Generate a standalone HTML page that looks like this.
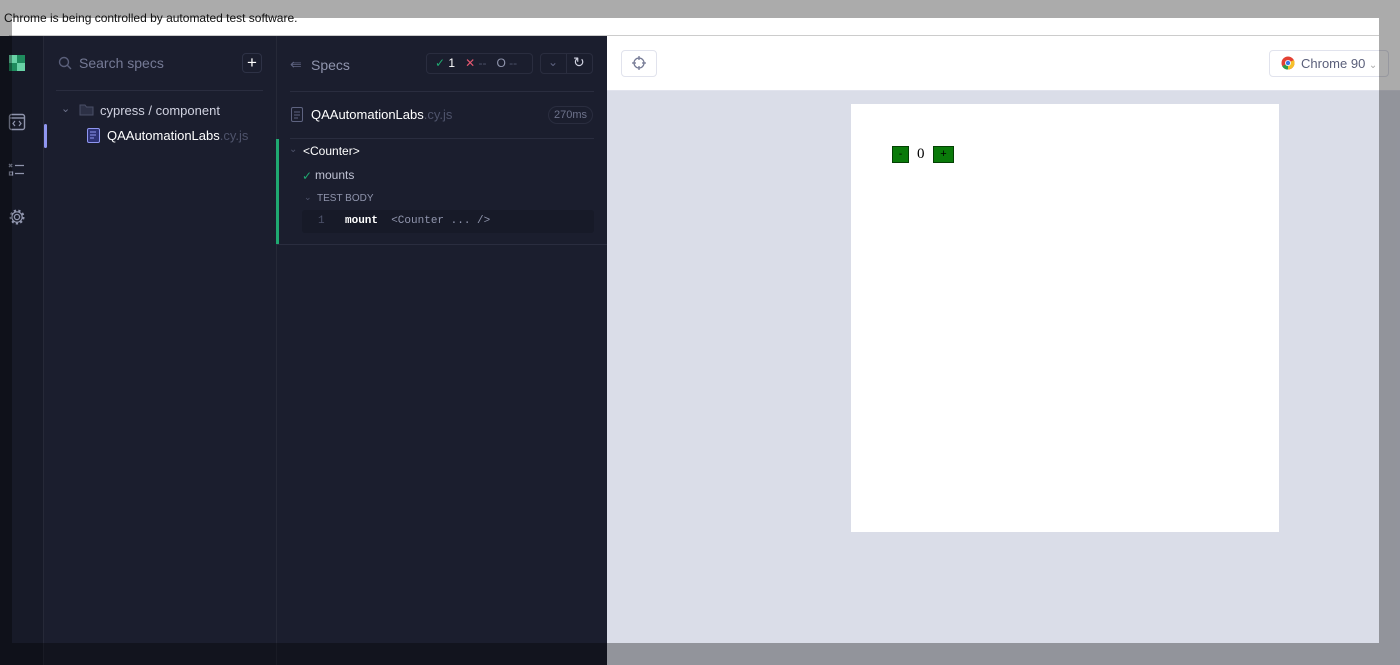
<!DOCTYPE html>
<html><head><meta charset="utf-8"><style>
*{box-sizing:border-box;margin:0;padding:0}
body{width:1400px;height:665px;overflow:hidden;position:relative;background:#fff;font-family:"Liberation Sans",sans-serif}
.a{position:absolute}
.ov{position:absolute;background:rgba(0,0,0,0.33);z-index:10}
.t{color:#d0d2e0;font-size:13px;white-space:nowrap}
</style></head><body>
<div class="a" style="left:0;top:36px;width:607px;height:629px;background:#1b1e2e"></div>
<div class="a" style="left:0;top:36px;width:44px;height:629px;background:#171a28;border-right:1px solid #262938"></div>
<div class="a" style="left:276px;top:36px;width:1px;height:629px;background:#262938"></div>
<div class="a" style="left:9px;top:55px;width:8px;height:8px;background:#69d3a7"></div>
<div class="a" style="left:17px;top:55px;width:8px;height:8px;background:#1f8c5e"></div>
<div class="a" style="left:9px;top:63px;width:8px;height:8px;background:#1f8c5e"></div>
<div class="a" style="left:17px;top:63px;width:8px;height:8px;background:#69d3a7"></div>
<svg class="a" style="left:8px;top:113px" width="18" height="18"><rect x="1.5" y="1.5" width="15" height="15" rx="2" fill="none" stroke="#9095ad" stroke-width="1.4"/><line x1="1.5" y1="5" x2="16.5" y2="5" stroke="#9095ad" stroke-width="1.4"/><path d="M7 8l-2 2.5 2 2.5M11 8l2 2.5-2 2.5" fill="none" stroke="#9095ad" stroke-width="1.2"/></svg>
<svg class="a" style="left:8px;top:162px" width="18" height="16"><path d="M1 2l3 3M4 2l-3 3M7 3.5h9M1.5 10h3v3h-3zM7 11.5h9" fill="none" stroke="#9095ad" stroke-width="1.3"/></svg>
<svg class="a" style="left:8px;top:208px" width="18" height="18" viewBox="0 0 18 18"><circle cx="9" cy="9" r="2.6" fill="none" stroke="#9095ad" stroke-width="1.3"/><circle cx="9" cy="9" r="6.3" fill="none" stroke="#9095ad" stroke-width="2.4" stroke-dasharray="2.2 2.2"/><circle cx="9" cy="9" r="5.2" fill="none" stroke="#9095ad" stroke-width="1.2"/></svg>
<div class="a" style="left:44px;top:124px;width:3px;height:24px;background:#8f96f0;border-radius:2px"></div>
<svg class="a" style="left:58px;top:56px" width="14" height="14"><circle cx="6" cy="6" r="4.5" fill="none" stroke="#5a5f7a" stroke-width="1.4"/><line x1="9.3" y1="9.3" x2="13" y2="13" stroke="#5a5f7a" stroke-width="1.4"/></svg>
<div class="a t" style="left:79px;top:55px;font-size:14px;color:#757a95">Search specs</div>
<div class="a" style="left:242px;top:53px;width:20px;height:20px;border:1px solid #2e3246;border-radius:4px;color:#fff;font-size:17px;line-height:17px;text-align:center">+</div>
<div class="a" style="left:56px;top:90px;width:207px;height:1px;background:#2a2d3f"></div>
<div class="a t" style="left:61px;top:102px;color:#6e738c;font-size:11px">&#8964;</div>
<svg class="a" style="left:79px;top:103px" width="15" height="13"><path d="M1 2h5l1.5 2H14v8H1z" fill="#2c3045" stroke="#4a4f67"/></svg>
<div class="a t" style="left:100px;top:103px">cypress / component</div>
<svg class="a" style="left:87px;top:128px" width="13" height="15"><rect x="0.5" y="0.5" width="12" height="14" rx="1.5" fill="#2d3275" stroke="#8f96f0"/><path d="M3 4h6M3 7h6M3 10h4" stroke="#8f96f0"/></svg>
<div class="a t" style="left:107px;top:128px;color:#fff">QAAutomationLabs<span style="color:#4e536b">.cy.js</span></div>
<div class="a t" style="left:290px;top:56px;color:#5e6380;font-size:14px">&#8666;</div>
<div class="a t" style="left:311px;top:57px;color:#9095ad;font-size:14px">Specs</div>
<div class="a" style="left:426px;top:53px;width:107px;height:21px;border:1px solid #2a2d3f;border-radius:4px"></div>
<div class="a t" style="left:435px;top:56px;font-size:12px;color:#fff"><span style="color:#1fa971">&#10003;</span> 1 &nbsp;&nbsp;<span style="color:#e45770">&#10005;</span><span style="color:#4e536b"> -- </span>&nbsp;&nbsp;<span style="color:#9095ad">&#927;</span><span style="color:#4e536b"> --</span></div>
<div class="a" style="left:540px;top:53px;width:53px;height:21px;border:1px solid #2a2d3f;border-radius:4px"></div>
<div class="a" style="left:566px;top:53px;width:1px;height:21px;background:#2a2d3f"></div>
<div class="a t" style="left:548px;top:55px;color:#5e6380;font-size:12px">&#8964;</div>
<div class="a t" style="left:573px;top:54px;color:#d0d2e0;font-size:14px">&#8635;</div>
<div class="a" style="left:290px;top:91px;width:304px;height:1px;background:#2a2d3f"></div>
<svg class="a" style="left:291px;top:107px" width="12" height="15"><rect x="0.5" y="0.5" width="11" height="14" rx="1.5" fill="none" stroke="#5e6380"/><path d="M3 5h6M3 8h6M3 11h4" stroke="#5e6380"/></svg>
<div class="a t" style="left:311px;top:107px;color:#fff">QAAutomationLabs<span style="color:#4e536b">.cy.js</span></div>
<div class="a t" style="left:548px;top:106px;width:45px;height:18px;border:1px solid #2a2d3f;border-radius:9px;color:#6e738c;font-size:11px;text-align:center;line-height:16px">270ms</div>
<div class="a" style="left:290px;top:138px;width:304px;height:1px;background:#2a2d3f"></div>
<div class="a" style="left:276px;top:139px;width:3px;height:105px;background:#1fa971"></div>
<div class="a" style="left:276px;top:244px;width:331px;height:1px;background:#2a2d3f"></div>
<div class="a t" style="left:289px;top:144px;color:#4e536b;font-size:10px">&#8964;</div>
<div class="a t" style="left:303px;top:144px;color:#fff;font-size:12px">&lt;Counter&gt;</div>
<div class="a t" style="left:302px;top:169px;color:#1fa971;font-size:12px">&#10003;</div>
<div class="a t" style="left:315px;top:168px;color:#c0c3d4;font-size:12px">mounts</div>
<div class="a t" style="left:304px;top:192px;color:#4e536b;font-size:9px">&#8964;</div>
<div class="a t" style="left:317px;top:193px;color:#9095ad;font-size:10px">TEST BODY</div>
<div class="a" style="left:302px;top:210px;width:292px;height:23px;background:#171a28;border-radius:3px"></div>
<div class="a t" style="left:318px;top:215px;font-family:'Liberation Mono',monospace;font-size:11px;color:#4e536b">1</div>
<div class="a t" style="left:345px;top:215px;font-family:'Liberation Mono',monospace;font-size:11px;color:#fff;font-weight:bold">mount <span style="font-weight:normal;color:#9095ad">&nbsp;&lt;Counter ... /&gt;</span></div>
<div class="a" style="left:607px;top:36px;width:793px;height:629px;background:#dadde8"></div>
<div class="a" style="left:607px;top:36px;width:793px;height:55px;background:#fff;border-bottom:1px solid #e1e3ed"></div>
<div class="a" style="left:621px;top:50px;width:36px;height:27px;border:1px solid #e1e3ed;border-radius:4px"></div>
<svg class="a" style="left:632px;top:56px" width="14" height="14"><circle cx="7" cy="7" r="5" fill="none" stroke="#747994" stroke-width="1.3"/><path d="M7 0v4M7 10v4M0 7h4M10 7h4" stroke="#747994" stroke-width="1.3"/></svg>
<div class="a" style="left:1269px;top:50px;width:120px;height:27px;border:1px solid #e1e3ed;border-radius:4px"></div>
<svg class="a" style="left:1281px;top:56px" width="14" height="14" viewBox="0 0 14 14"><circle cx="7" cy="7" r="6.5" fill="#e34133"/><path d="M7 7L1.2 10.2A6.5 6.5 0 0 0 7 13.5z" fill="#2d9c4a"/><path d="M7 7L7 13.5A6.5 6.5 0 0 0 12.8 4z" fill="#f6c02a"/><circle cx="7" cy="7" r="3" fill="#fff"/><circle cx="7" cy="7" r="2.2" fill="#3b78e7"/></svg>
<div class="a t" style="left:1301px;top:56px;color:#5a5f7a">Chrome 90 <span style="color:#aaa;font-size:10px">&#8964;</span></div>
<div class="a" style="left:851px;top:104px;width:428px;height:428px;background:#fff"></div>
<div class="a" style="left:892px;top:146px;width:17px;height:17px;background:#0a7a0a;border:1px solid #034003;font-size:10px;text-align:center;line-height:15px">-</div>
<div class="a" style="left:917px;top:146px;font-family:'Liberation Serif',serif;font-size:15px">0</div>
<div class="a" style="left:933px;top:146px;width:21px;height:17px;background:#0a7a0a;border:1px solid #034003;font-size:11px;text-align:center;line-height:15px">+</div>
<div class="a" style="left:9px;top:18px;width:1370px;height:18px;background:#fff;border-bottom:1px solid #ccc"></div>
<div class="ov" style="left:0;top:0;width:1400px;height:18px"></div>
<div class="ov" style="left:0;top:18px;width:12px;height:647px"></div>
<div class="ov" style="left:1379px;top:18px;width:21px;height:647px"></div>
<div class="ov" style="left:12px;top:643px;width:1367px;height:22px"></div>
<div class="a" style="left:4px;top:11px;font-size:12px;color:#111;z-index:20;white-space:nowrap">Chrome is being controlled by automated test software.</div>
</body></html>
